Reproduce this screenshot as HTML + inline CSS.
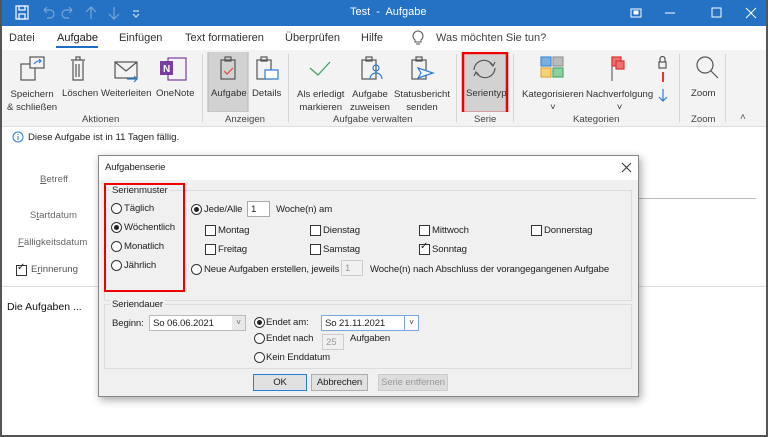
<!DOCTYPE html>
<html><head><meta charset="utf-8"><style>
*{margin:0;padding:0;box-sizing:border-box}
body{width:768px;height:437px;overflow:hidden;font-family:"Liberation Sans",sans-serif;font-size:9.6px;color:#222;background:#fff;position:relative}
.a{position:absolute;white-space:nowrap}
.frame{position:absolute;left:0;top:0;width:768px;height:437px;border:2px solid #555;border-top:none;pointer-events:none}
.title{left:0;top:0;width:768px;height:26px;background:#2571c4;color:#fff}
.tab{top:32px;font-size:11px;color:#333}
.rib{left:2px;top:50px;width:764px;height:77px;background:#f3f3f3;border-bottom:1px solid #ddd}
.lbl{font-size:9.6px;color:#333;text-align:center}
.grp{font-size:9.6px;color:#444;top:114px}
.sep{width:1px;height:68px;top:54px;background:#d6d6d6}
.dlg{left:98px;top:155px;width:541px;height:242px;background:#f0f0f0;border:1px solid #888;box-shadow:2px 3px 8px rgba(0,0,0,.35);letter-spacing:-0.12px}
.dlg .t{margin-top:1px}
.box{border:1px solid #dcdcdc}
.rad{width:11px;height:11px;border:1px solid #333;border-radius:50%;background:#fff}
.rad.on::after{content:"";position:absolute;left:2px;top:2px;width:5px;height:5px;border-radius:50%;background:#222}
.cb{width:11px;height:11px;border:1px solid #333;background:#fff}
.inp{background:#fff;border:1px solid #aaa;padding:2px 3px}
.btn{height:17px;border:1px solid #adadad;background:#e1e1e1;text-align:center;line-height:15px}
</style></head><body>
<div class="a title"></div>
<svg class="a" style="left:14px;top:5px" width="130" height="16" fill="none" stroke-width="1.2">
<rect x="2" y="1" width="12" height="13" stroke="#fff"/><rect x="5" y="1" width="6" height="4" stroke="#fff"/><rect x="5" y="9" width="6" height="5" stroke="#fff"/>
<path d="M30 5 h6 a4 4 0 0 1 0 8 h-3 M30 5 l3-3 M30 5 l3 3" stroke="#7aa6d8"/>
<path d="M58 5 h-6 a4 4 0 0 0 0 8 h3 M58 5 l-3-3 M58 5 l-3 3" stroke="#7aa6d8"/>
<path d="M77 2 v12 M72 7 l5-5 5 5" stroke="#7aa6d8"/><path d="M100 2 v12 M95 9 l5 5 5-5" stroke="#7aa6d8"/>
<path d="M119 6 h6 M119 9 l3 3 3-3" stroke="#ccdcf0"/></svg>
<div class="a" style="left:350px;top:6px;color:#fff;font-size:11px">Test &nbsp;-&nbsp; Aufgabe</div>
<svg class="a" style="left:630px;top:6px" width="140" height="16" fill="none" stroke="#fff" stroke-width="1"><rect x="1" y="3" width="10" height="8"/><rect x="4" y="5" width="4" height="3" fill="#fff"/><path d="M35 7h10"/><rect x="82" y="2" width="9" height="9"/><path d="M116 2l10 10M126 2l-10 10"/></svg>
<div class="a tab" style="left:9px">Datei</div>
<div class="a tab" style="left:57px;color:#1a1a1a">Aufgabe</div>
<div class="a" style="left:56px;top:46px;width:42px;height:2px;background:#1f6dbf"></div>
<div class="a tab" style="left:119px">Einfügen</div>
<div class="a tab" style="left:185px">Text formatieren</div>
<div class="a tab" style="left:285px">Überprüfen</div>
<div class="a tab" style="left:361px">Hilfe</div>
<svg class="a" style="left:412px;top:30px" width="12" height="16" fill="none" stroke="#555"><path d="M3 10 a5 5 0 1 1 6 0 v2 h-6z M4 14h4"/></svg>
<div class="a tab" style="left:436px;color:#444">Was möchten Sie tun?</div>
<div class="a rib"></div>
<svg class="a" style="left:0;top:52px" width="768" height="60" fill="none" stroke-width="1.2">
<rect x="21" y="12" width="14" height="16" stroke="#555"/><rect x="30" y="5" width="14" height="11" stroke="#555" fill="#f3f3f3"/><path d="M34 12 q3-4 7-3 M39 7 l2 2-2 2" stroke="#2b7cd3"/>
<path d="M71 8h14 M76 8v-3h4v3 M73 9v19h10v-19 M76 12v13M79 12v13" stroke="#555"/>
<rect x="115" y="10" width="22" height="16" stroke="#555"/><path d="M115 10l11 9 11-9" stroke="#555"/><path d="M127 27h10 M134 24l3 3-3 3" stroke="#2b7cd3"/>
<rect x="168" y="6" width="18" height="22" stroke="#7a3ea0"/><rect x="160" y="9" width="13" height="14" fill="#7a3ea0"/><text x="163" y="20" font-size="10" font-weight="bold" fill="#fff" font-family="Liberation Sans">N</text>
<rect x="208" y="-1" width="40" height="61" fill="#d2d2d2" stroke="#bcbcbc"/>
<rect x="221" y="8" width="14" height="19" stroke="#555"/><rect x="225" y="5" width="6" height="4" stroke="#555"/><path d="M224 19l3 3 6-6" stroke="#e0453a"/>
<rect x="257" y="8" width="14" height="19" stroke="#555"/><rect x="261" y="5" width="6" height="4" stroke="#555"/><rect x="265" y="18" width="13" height="9" stroke="#2b7cd3" fill="#fff"/>
<path d="M310 16l8 7 12-13" stroke="#3aa060"/>
<rect x="362" y="8" width="14" height="19" stroke="#555"/><rect x="366" y="5" width="6" height="4" stroke="#555"/><circle cx="376" cy="16" r="3" stroke="#2b7cd3"/><path d="M370 27a6 6 0 0 1 12 0" stroke="#2b7cd3"/>
<rect x="412" y="8" width="14" height="19" stroke="#555"/><rect x="416" y="5" width="6" height="4" stroke="#555"/><path d="M418 16l15 5-15 5 3-5z" stroke="#2b7cd3" fill="#fff"/>
<rect x="463" y="1" width="44" height="60" fill="#d2d2d2" stroke="#e00" stroke-width="2.5"/>
<path d="M474 18a10 10 0 0 1 19-4 M495 16a10 10 0 0 1-19 4 M490 11l3 3 2-4 M479 23l-3-3-2 4" stroke="#555"/>
<rect x="541" y="5" width="10" height="9" fill="#7ab0e0" stroke="#4a8acd"/><rect x="553" y="5" width="10" height="9" fill="#bbb" stroke="#999"/><rect x="541" y="16" width="10" height="9" fill="#f5d27a" stroke="#e0a840"/><rect x="553" y="16" width="10" height="9" fill="#8fd0a0" stroke="#4aaa6a"/>
<path d="M612 5v24" stroke="#666"/><rect x="612" y="5" width="9" height="9" fill="#f07070" stroke="#d33"/><rect x="616" y="9" width="8" height="8" fill="#f07070" stroke="#d33"/>
<rect x="659" y="10" width="7" height="6" stroke="#555"/><path d="M660 10v-3a2.5 2.5 0 0 1 5 0v3" stroke="#555"/>
<path d="M663 20v10" stroke="#e33" stroke-width="2"/><path d="M663 37v12 M659 45l4 4 4-4" stroke="#2b7cd3"/>
<circle cx="705" cy="13" r="8" stroke="#555"/><path d="M711 19l7 7" stroke="#555"/>
</svg>
<div class="a lbl" style="left:7px;top:88px;line-height:13px">Speichern<br>&amp; schließen</div>
<div class="a lbl" style="left:62px;top:88px">Löschen</div>
<div class="a lbl" style="left:101px;top:88px">Weiterleiten</div>
<div class="a lbl" style="left:156px;top:88px">OneNote</div>
<div class="a lbl" style="left:211px;top:88px">Aufgabe</div>
<div class="a lbl" style="left:252px;top:88px">Details</div>
<div class="a lbl" style="left:297px;top:88px;line-height:13px">Als erledigt<br>markieren</div>
<div class="a lbl" style="left:350px;top:88px;line-height:13px">Aufgabe<br>zuweisen</div>
<div class="a lbl" style="left:394px;top:88px;line-height:13px">Statusbericht<br>senden</div>
<div class="a lbl" style="left:466px;top:88px">Serientyp</div>
<div class="a lbl" style="left:522px;top:88px;line-height:13px">Kategorisieren<br>˅</div>
<div class="a lbl" style="left:586px;top:88px;line-height:13px">Nachverfolgung<br>˅</div>
<div class="a lbl" style="left:691px;top:88px">Zoom</div>
<div class="a grp" style="left:82px">Aktionen</div>
<div class="a grp" style="left:225px">Anzeigen</div>
<div class="a grp" style="left:333px">Aufgabe verwalten</div>
<div class="a grp" style="left:474px">Serie</div>
<div class="a grp" style="left:573px">Kategorien</div>
<div class="a grp" style="left:691px">Zoom</div>
<div class="a sep" style="left:202px"></div><div class="a sep" style="left:288px"></div><div class="a sep" style="left:456px"></div><div class="a sep" style="left:513px"></div><div class="a sep" style="left:679px"></div><div class="a sep" style="left:725px"></div>
<div class="a" style="left:740px;top:112px;font-size:10px;color:#555">˄</div>
<svg class="a" style="left:12px;top:131px" width="12" height="12" fill="none"><circle cx="6" cy="6" r="5" stroke="#2b7cd3"/><path d="M6 5v4M6 3v1" stroke="#2b7cd3"/></svg>
<div class="a" style="left:28px;top:132px;font-size:9.6px">Diese Aufgabe ist in 11 Tagen fällig.</div>
<div class="a" style="left:40px;top:174px;color:#666"><u>B</u>etreff</div>
<div class="a" style="left:30px;top:210px;color:#666">S<u>t</u>artdatum</div>
<div class="a" style="left:18px;top:237px;color:#666"><u>F</u>älligkeitsdatum</div>
<div class="a cb" style="left:16px;top:265px"></div><div class="a" style="left:17px;top:262px;font-size:10px">✓</div>
<div class="a" style="left:31px;top:264px;color:#555">E<u>r</u>innerung</div>
<div class="a" style="left:2px;top:286px;width:764px;height:1px;background:#ddd"></div>
<div class="a" style="left:638px;top:198px;width:118px;height:1px;background:#bbb"></div>
<div class="a" style="left:7px;top:301px;font-size:10.5px;color:#111">Die Aufgaben ...</div>
<div class="a dlg">
 <div class="a" style="left:0;top:0;width:539px;height:24px;background:#fff"></div>
 <div class="a" style="left:6px;top:6px">Aufgabenserie</div>
 <svg class="a" style="left:522px;top:6px" width="11" height="11" stroke="#333"><path d="M1 1l9 9M10 1l-9 9"/></svg>
 <div class="a box" style="left:5px;top:34px;width:528px;height:111px"></div>
 <div class="a" style="left:11px;top:29px;background:#f0f0f0;padding:0 2px">Serienmuster</div>
 <div class="a" style="left:5px;top:27px;width:81px;height:109px;border:2.5px solid #e00"></div>
 <div class="a rad" style="left:12px;top:47px"></div><div class="a t" style="left:25px;top:46px">Täglich</div>
 <div class="a rad on" style="left:12px;top:66px"></div><div class="a t" style="left:25px;top:65px">Wöchentlich</div>
 <div class="a rad" style="left:12px;top:85px"></div><div class="a t" style="left:25px;top:84px">Monatlich</div>
 <div class="a rad" style="left:12px;top:104px"></div><div class="a t" style="left:25px;top:103px">Jährlich</div>
 <div class="a rad on" style="left:92px;top:48px"></div><div class="a t" style="left:105px;top:47px">Jede/Alle</div>
 <div class="a inp" style="left:148px;top:45px;width:23px;height:16px">1</div>
 <div class="a t" style="left:177px;top:47px">Woche(n) am</div>
 <div class="a cb" style="left:106px;top:69px"></div><div class="a t" style="left:119px;top:68px">Montag</div>
 <div class="a cb" style="left:211px;top:69px"></div><div class="a t" style="left:224px;top:68px">Dienstag</div>
 <div class="a cb" style="left:320px;top:69px"></div><div class="a t" style="left:333px;top:68px">Mittwoch</div>
 <div class="a cb" style="left:432px;top:69px"></div><div class="a t" style="left:445px;top:68px">Donnerstag</div>
 <div class="a cb" style="left:106px;top:88px"></div><div class="a t" style="left:119px;top:87px">Freitag</div>
 <div class="a cb" style="left:211px;top:88px"></div><div class="a t" style="left:224px;top:87px">Samstag</div>
 <div class="a cb" style="left:320px;top:88px"></div><div class="a" style="left:321px;top:85px;font-size:10px">✓</div><div class="a t" style="left:333px;top:87px">Sonntag</div>
 <div class="a rad" style="left:92px;top:108px"></div><div class="a t" style="left:105px;top:107px">Neue Aufgaben erstellen, jeweils</div>
 <div class="a inp" style="left:242px;top:104px;width:22px;height:16px;color:#999;background:#f0f0f0;border-color:#ccc">1</div>
 <div class="a t" style="left:271px;top:107px">Woche(n) nach Abschluss der vorangegangenen Aufgabe</div>
 <div class="a box" style="left:5px;top:148px;width:528px;height:65px"></div>
 <div class="a" style="left:11px;top:143px;background:#f0f0f0;padding:0 2px">Seriendauer</div>
 <div class="a t" style="left:13px;top:161px">Beginn:</div>
 <div class="a inp" style="left:50px;top:159px;width:97px;height:16px;border-color:#bbb">So 06.06.2021</div>
 <div class="a" style="left:133px;top:160px;width:13px;height:14px;background:#e8e8e8;font-size:8px;text-align:center;line-height:14px;color:#666">˅</div>
 <div class="a rad on" style="left:155px;top:161px"></div><div class="a t" style="left:167px;top:160px">Endet am:</div>
 <div class="a inp" style="left:222px;top:159px;width:98px;height:16px;border-color:#7aa6d8">So 21.11.2021</div>
 <div class="a" style="left:305px;top:160px;width:14px;height:14px;border-left:1px solid #7aa6d8;font-size:8px;text-align:center;line-height:14px;color:#333">˅</div>
 <div class="a rad" style="left:155px;top:177px"></div><div class="a t" style="left:167px;top:176px">Endet nach</div>
 <div class="a inp" style="left:223px;top:178px;width:22px;height:16px;color:#999;background:#f0f0f0;border-color:#ccc">25</div>
 <div class="a t" style="left:251px;top:176px">Aufgaben</div>
 <div class="a rad" style="left:155px;top:196px"></div><div class="a t" style="left:167px;top:195px">Kein Enddatum</div>
 <div class="a btn" style="left:154px;top:218px;width:54px;border:1.5px solid #2b7cd3">OK</div>
 <div class="a btn" style="left:212px;top:218px;width:57px">Abbrechen</div>
 <div class="a btn" style="left:279px;top:218px;width:70px;color:#999;background:#ddd;border-color:#ccc">Serie entfernen</div>
</div>
<div class="frame"></div>
</body></html>
